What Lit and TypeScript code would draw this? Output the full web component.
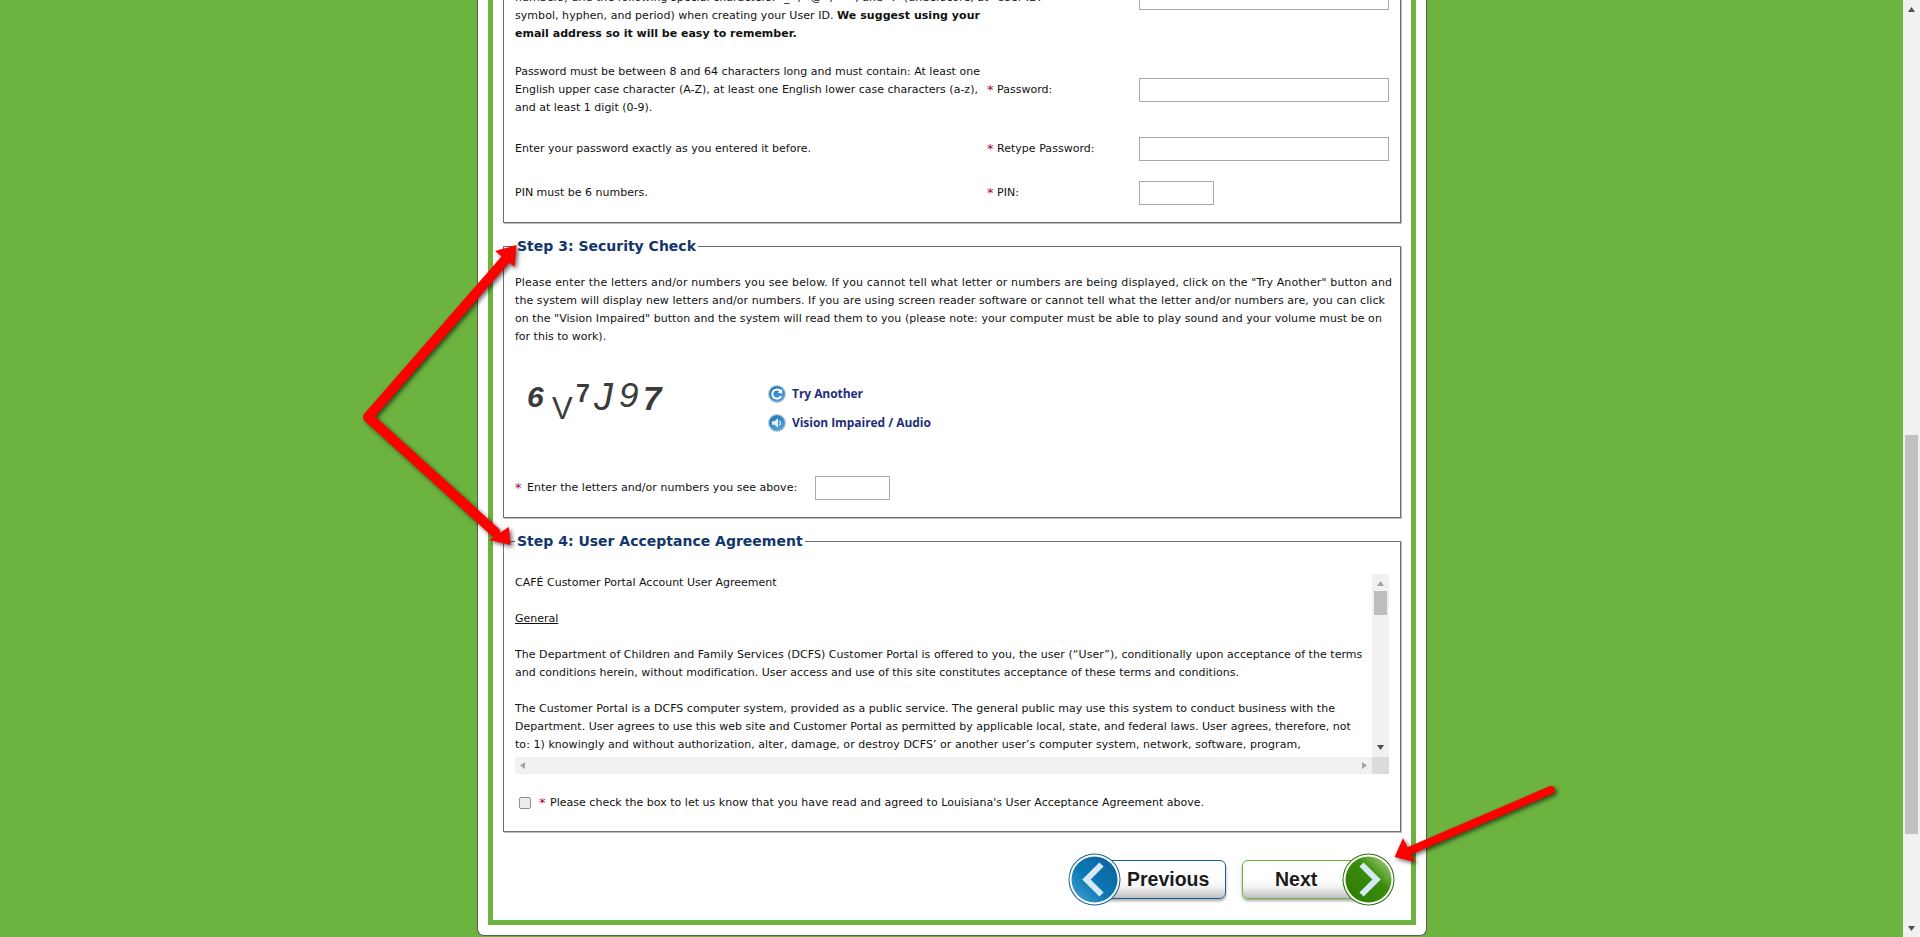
import { LitElement, html, css, svg } from "lit";
import { customElement } from "lit/decorators.js";

const captcha = [
  { c: "6", x: 12, y: 29, s: 30, w: 700, st: "italic" },
  { c: "V", x: 37, y: 41, s: 31, w: 400, st: "normal" },
  { c: "7", x: 61, y: 24, s: 25, w: 700, st: "normal" },
  { c: "J", x: 79, y: 32, s: 38, w: 400, st: "italic" },
  { c: "9", x: 104, y: 29, s: 35, w: 400, st: "italic" },
  { c: "7", x: 128, y: 32, s: 33, w: 700, st: "italic" },
];

const securityLines = [
  { t: `Please enter the letters and/or numbers you see below. If you cannot tell what letter or numbers are being displayed, click on the "Try Another" button and`, ls: 0.14 },
  { t: `the system will display new letters and/or numbers. If you are using screen reader software or cannot tell what the letter and/or numbers are, you can click`, ls: 0.078 },
  { t: `on the "Vision Impaired" button and the system will read them to you (please note: your computer must be able to play sound and your volume must be on`, ls: 0.047 },
  { t: `for this to work).`, ls: 0 },
];

const agreementA = [
  { t: "The Department of Children and Family Services (DCFS) Customer Portal is offered to you, the user (“User”), conditionally upon acceptance of the terms", ls: 0.04 },
  { t: "and conditions herein, without modification. User access and use of this site constitutes acceptance of these terms and conditions.", ls: 0.01 },
];
const agreementB = [
  { t: "The Customer Portal is a DCFS computer system, provided as a public service. The general public may use this system to conduct business with the", ls: 0.02 },
  { t: "Department. User agrees to use this web site and Customer Portal as permitted by applicable local, state, and federal laws. User agrees, therefore, not", ls: 0.01 },
  { t: "to: 1) knowingly and without authorization, alter, damage, or destroy DCFS’ or another user’s computer system, network, software, program,", ls: 0.05 },
];

@customElement("app-root")
export class AppRoot extends LitElement {
  static styles = css`
    :host {
      display: block;
      position: relative;
      height: 937px;
      overflow: hidden;
      background: #6cb33f;
      font-family: "DejaVu Sans", Verdana, sans-serif;
      font-size: 11px;
      line-height: 18px;
      color: #111;
    }
    .page { display: flex; height: 937px; }
    .main { flex: 1; overflow: hidden; }
    .card {
      box-sizing: border-box;
      width: 950px;
      margin: -43px 0 0 477px;
      padding: 0 10px 10px;
      background: #fff;
      border: 1px solid #55624c;
      border-top: 0;
      border-radius: 0 0 7px 7px;
    }
    .frame {
      border: 5px solid #6cb33f;
      padding: 0 10px 14px;
    }
    fieldset {
      margin: 15px 0 0;
      padding: 0 11px;
      border: 1px solid #6f6f6f;
      box-shadow: 1px 1px 0 #bdbdbd;
      min-width: 0;
    }
    fieldset.first { margin-top: 0; border-top: 0; padding-top: 27px; padding-bottom: 17px; }
    legend {
      padding: 0 2px;
      font-size: 14px;
      line-height: 17px;
      font-weight: 700;
      color: #12366b;
    }
    .row {
      display: grid;
      grid-template-columns: 472px 152px 250px;
      align-items: center;
      min-height: 24px;
      margin-top: 20px;
    }
    .row.top { align-items: start; margin-top: 0; }
    .row.top input { margin-top: -3px; }
    .label { white-space: nowrap; display: flex; letter-spacing: 0.03px; }
    .star { color: #a5004d; width: 10px; flex: none; font-size: 13px; }
    input[type="text"], input[type="password"] {
      box-sizing: border-box;
      height: 24px;
      width: 250px;
      margin: 0;
      padding: 0 3px;
      border: 1px solid #a9a9a9;
      background: #fff;
      display: block;
    }
    input.short { width: 75px; }
    .desc { white-space: nowrap; }
    .line { display: block; }
    .sec3 { padding-top: 19px; padding-bottom: 17px; }
    .cap-row { display: flex; align-items: center; margin-top: 32px; height: 60px; }
    .cap { width: 253px; height: 60px; display: block; flex: none; }
    .cap text { font-family: "Liberation Sans", Arial, sans-serif; fill: #3b3b3b; }
    .links { display: flex; flex-direction: column; gap: 11px; }
    .link {
      display: flex;
      align-items: center;
      gap: 6px;
      height: 18px;
      color: #1d2f78;
      font-family: "Open Sans", sans-serif;
      font-size: 12px;
      font-weight: 700;
      letter-spacing: -0.05px;
      white-space: nowrap;
    }
    .link svg { width: 18px; height: 18px; flex: none; }
    .enter { display: flex; align-items: center; margin-top: 38px; white-space: nowrap; letter-spacing: 0.03px; }
    .enter .star { width: 12px; }
    .enter input { margin-left: 18px; }
    .sec4 { padding-top: 24px; padding-bottom: 19px; }
    .box {
      display: grid;
      grid-template-columns: 857px 17px;
      grid-template-rows: 183px 17px;
      width: 874px;
    }
    .view { overflow: hidden; white-space: nowrap; }
    .view p { margin: 0 0 18px; }
    .view u { text-decoration: underline; }
    .vbar {
      background: #f1f1f1;
      display: flex;
      flex-direction: column;
      align-items: center;
      justify-content: space-between;
      position: relative;
      padding: 7px 0;
      box-sizing: border-box;
    }
    .vthumb { position: absolute; top: 17px; left: 2px; width: 13px; height: 24px; background: #bebebe; }
    .hbar {
      background: #f1f1f1;
      display: flex;
      align-items: center;
      justify-content: space-between;
      padding: 0 5px;
    }
    .corner { background: #dcdcdc; }
    .arr { display: block; }
    .check { display: flex; align-items: center; margin-top: 20px; white-space: nowrap; letter-spacing: 0.02px; }
    .check .star { width: 11px; }
    .check input {
      appearance: none;
      box-sizing: border-box;
      width: 12px;
      height: 12px;
      margin: 0 8px 0 4px;
      border: 1px solid #8f8f8f;
      border-radius: 2px;
      background: #ececec;
    }
    .buttons { display: flex; justify-content: flex-end; gap: 16px; margin: 21px 6px 0 0; }
    .btn {
      display: flex;
      align-items: center;
      height: 53px;
      font-family: "Liberation Sans", Arial, sans-serif;
      font-size: 19.5px;
      font-weight: 700;
      color: #1b1b1b;
    }
    .btn svg { width: 53px; height: 53px; flex: none; position: relative; z-index: 1; }
    .body {
      box-sizing: border-box;
      height: 39px;
      padding-bottom: 2px;
      display: flex;
      align-items: center;
      border-radius: 6px;
      background: linear-gradient(#fff 50%, #f1f1f1 72%, #bfbfbf 100%);
      box-shadow: 0 2px 3px rgba(0, 0, 0, 0.35);
    }
    .prev .body { width: 126px; margin-left: -21px; padding-left: 26px; border: 1px solid #1c5f98; }
    .next .body { width: 128px; margin-right: -28px; padding-left: 32px; border: 1px solid #6cb33f; }
    .sb {
      width: 17px;
      flex: none;
      background: #f1f1f1;
      display: flex;
      flex-direction: column;
      align-items: center;
      position: relative;
    }
    .sb .up { margin-top: 7px; }
    .sb .thumb { position: absolute; top: 435px; left: 2px; width: 13px; height: 399px; background: #c1c1c1; }
    .sb .down { position: absolute; top: 926px; left: 5px; }
    .overlay {
      position: absolute;
      inset: 0;
      width: 1920px;
      height: 937px;
      pointer-events: none;
      filter: drop-shadow(2px 2px 2px rgba(0, 0, 0, 0.6));
    }
  `;

  private up(c = "#a3a3a3") {
    return html`<svg class="arr up" width="7" height="5" viewBox="0 0 7 5"><polygon points="3.5,0 7,5 0,5" fill=${c}></polygon></svg>`;
  }
  private down(c = "#505050") {
    return html`<svg class="arr down" width="7" height="5" viewBox="0 0 7 5"><polygon points="0,0 7,0 3.5,5" fill=${c}></polygon></svg>`;
  }
  private lines(list: { t: string; ls: number }[]) {
    return list.map((l) => html`<span class="line" style="letter-spacing:${l.ls}px">${l.t}</span>`);
  }

  private defs() {
    return svg`<defs>
      <linearGradient id="ib" x1="0.2" y1="0" x2="0.8" y2="1"><stop offset="0" stop-color="#1b75b8"/><stop offset="1" stop-color="#5aa6dc"/></linearGradient>
      <linearGradient id="pb" x1="1" y1="0" x2="0" y2="1"><stop offset="0" stop-color="#0d5f9c"/><stop offset="0.55" stop-color="#0a78b3"/><stop offset="1" stop-color="#4ba3d4"/></linearGradient>
      <linearGradient id="nb" x1="1" y1="0" x2="0" y2="1"><stop offset="0" stop-color="#b4dc8e"/><stop offset="0.4" stop-color="#3b8d0c"/><stop offset="1" stop-color="#2a7a00"/></linearGradient>
    </defs>`;
  }

  render() {
    return html`
      <div class="page">
        <div class="main">
          <div class="card">
            <div class="frame">
              <fieldset class="first">
                <div class="row top">
                  <div class="desc">
                    <span class="line" style="letter-spacing:0.03px">numbers) and the following special characters: "_" / "@" / "-" , and "." (underscore, at</span>
                    <span class="line" style="letter-spacing:0.05px">symbol, hyphen, and period) when creating your User ID. <b>We suggest using your</b></span>
                    <span class="line"><b>email address so it will be easy to remember.</b></span>
                  </div>
                  <div class="label"><span class="star">*</span>User ID:</div>
                  <input type="text" />
                </div>
                <div class="row">
                  <div class="desc">Password must be between 8 and 64 characters long and must contain: At least one<br />English upper case character (A-Z), at least one English lower case characters (a-z),<br />and at least 1 digit (0-9).</div>
                  <div class="label"><span class="star">*</span>Password:</div>
                  <input type="password" />
                </div>
                <div class="row">
                  <div class="desc">Enter your password exactly as you entered it before.</div>
                  <div class="label"><span class="star">*</span>Retype Password:</div>
                  <input type="password" />
                </div>
                <div class="row">
                  <div class="desc">PIN must be 6 numbers.</div>
                  <div class="label"><span class="star">*</span>PIN:</div>
                  <input class="short" type="password" />
                </div>
              </fieldset>

              <fieldset class="sec3">
                <legend>Step 3: Security Check</legend>
                <div class="desc">${this.lines(securityLines)}</div>
                <div class="cap-row">
                  <svg class="cap" viewBox="0 0 253 60">
                    ${captcha.map(
                      (g) => svg`<text x=${g.x} y=${g.y} font-size=${g.s} font-weight=${g.w} font-style=${g.st}>${g.c}</text>`
                    )}
                  </svg>
                  <div class="links">
                    <div class="link">
                      <svg viewBox="0 0 18 18">
                        ${this.defs()}
                        <circle cx="9" cy="9" r="9" fill="#b9c4cc"></circle>
                        <circle cx="9" cy="9" r="7.8" fill="url(#ib)"></circle>
                        <path d="M12.6 6.2A4.6 4.6 0 1 0 13 11.2" fill="none" stroke="#fff" stroke-width="2"></path>
                        <polygon points="9.6,7.8 14.2,8.6 14,4" fill="#fff"></polygon>
                      </svg>
                      Try Another
                    </div>
                    <div class="link">
                      <svg viewBox="0 0 18 18">
                        <circle cx="9" cy="9" r="9" fill="#b9c4cc"></circle>
                        <circle cx="9" cy="9" r="7.8" fill="url(#ib)"></circle>
                        <polygon points="4,7.3 6.5,7.3 10,4.3 10,13.7 6.5,10.7 4,10.7" fill="#e6f1fa"></polygon>
                        <path d="M11.4 6.8A3 3 0 0 1 11.4 11.2" fill="none" stroke="#e6f1fa" stroke-width="1.2"></path>
                      </svg>
                      Vision Impaired / Audio
                    </div>
                  </div>
                </div>
                <div class="enter">
                  <span class="star">*</span>Enter the letters and/or numbers you see above:
                  <input class="short" type="text" />
                </div>
              </fieldset>

              <fieldset class="sec4">
                <legend>Step 4: User Acceptance Agreement</legend>
                <div class="box">
                  <div class="view">
                    <p>CAFÉ Customer Portal Account User Agreement</p>
                    <p><u>General</u></p>
                    <p>${this.lines(agreementA)}</p>
                    <p>${this.lines(agreementB)}</p>
                  </div>
                  <div class="vbar">
                    ${this.up()}
                    <div class="vthumb"></div>
                    ${this.down()}
                  </div>
                  <div class="hbar">
                    <svg class="arr" width="5" height="7" viewBox="0 0 5 7"><polygon points="5,0 5,7 0,3.5" fill="#a3a3a3"></polygon></svg>
                    <svg class="arr" width="5" height="7" viewBox="0 0 5 7"><polygon points="0,0 0,7 5,3.5" fill="#a3a3a3"></polygon></svg>
                  </div>
                  <div class="corner"></div>
                </div>
                <div class="check">
                  <input type="checkbox" />
                  <span class="star">*</span>Please check the box to let us know that you have read and agreed to Louisiana's User Acceptance Agreement above.
                </div>
              </fieldset>

              <div class="buttons">
                <div class="btn prev">
                  <svg viewBox="0 0 53 53">
                    <circle cx="26.5" cy="26.5" r="26" fill="#1c5f98"></circle>
                    <circle cx="26.5" cy="26.5" r="25" fill="#fff"></circle>
                    <circle cx="26.5" cy="26.5" r="23" fill="url(#pb)"></circle>
                    <polyline points="33.5,11.5 18.5,26.5 33.5,41.5" fill="none" stroke="#d6e9f6" stroke-width="6"></polyline>
                  </svg>
                  <div class="body">Previous</div>
                </div>
                <div class="btn next">
                  <div class="body">Next</div>
                  <svg viewBox="0 0 53 53">
                    <circle cx="26.5" cy="26.5" r="26" fill="#2f6b12"></circle>
                    <circle cx="26.5" cy="26.5" r="25" fill="#fff"></circle>
                    <circle cx="26.5" cy="26.5" r="23" fill="url(#nb)"></circle>
                    <polyline points="19.5,11.5 34.5,26.5 19.5,41.5" fill="none" stroke="#d6e9f6" stroke-width="6"></polyline>
                  </svg>
                </div>
              </div>
            </div>
          </div>
        </div>
        <div class="sb">
          ${this.up("#505050")}
          <div class="thumb"></div>
          ${this.down()}
        </div>
      </div>
      <svg class="overlay" viewBox="0 0 1920 937">
        <polyline points="505,260 368,417 495,532" fill="none" stroke="#f00" stroke-width="10" stroke-linejoin="round" stroke-linecap="round"></polyline>
        <polygon points="516.5,245 495,251 514.6,267" fill="#f00"></polygon>
        <polygon points="510.7,545 489,540 508.8,527" fill="#f00"></polygon>
        <line x1="1551" y1="790" x2="1409" y2="851" stroke="#f00" stroke-width="8" stroke-linecap="round"></line>
        <polygon points="1394.6,857 1403,838 1415,862" fill="#f00"></polygon>
      </svg>
    `;
  }
}
